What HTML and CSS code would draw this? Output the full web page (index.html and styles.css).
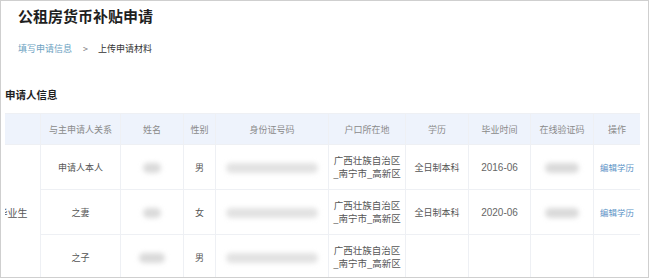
FILE: index.html
```html
<!DOCTYPE html>
<html lang="zh-CN">
  <head>
    <meta charset="UTF-8" />
    <meta name="viewport" content="width=device-width, initial-scale=1.0" />
    <title>公租房货币补贴申请</title>
    <link rel="stylesheet" href="styles.css">
  </head>
  <body>
    <div class="frame">
      <h1 class="page-title">公租房货币补贴申请</h1>

      <div class="steps">
        <span class="step done">填写申请信息</span>
        <span class="sep">&gt;</span>
        <span class="step">上传申请材料</span>
      </div>

      <h2 class="section-title">申请人信息</h2>

      <div class="table-wrap">
        <table class="info-table">
          <colgroup>
            <col style="width: 56px" />
            <col style="width: 80px" />
            <col style="width: 63px" />
            <col style="width: 32px" />
            <col style="width: 113px" />
            <col style="width: 77px" />
            <col style="width: 63px" />
            <col style="width: 62px" />
            <col style="width: 63px" />
            <col style="width: 47px" />
          </colgroup>
          <thead>
            <tr>
              <th></th>
              <th>与主申请人关系</th>
              <th>姓名</th>
              <th>性别</th>
              <th>身份证号码</th>
              <th>户口所在地</th>
              <th>学历</th>
              <th>毕业时间</th>
              <th>在线验证码</th>
              <th>操作</th>
            </tr>
          </thead>
          <tbody>
            <tr>
              <td rowspan="3" class="group">毕业生</td>
              <td>申请人本人</td>
              <td><span class="blur name"></span></td>
              <td>男</td>
              <td><span class="blur id"></span></td>
              <td class="addr">广西壮族自治区<br />_南宁市_高新区</td>
              <td>全日制本科</td>
              <td class="num">2016-06</td>
              <td><span class="blur code"></span></td>
              <td><a class="link" href="#">编辑学历</a></td>
            </tr>
            <tr>
              <td>之妻</td>
              <td><span class="blur name"></span></td>
              <td>女</td>
              <td><span class="blur id"></span></td>
              <td class="addr">广西壮族自治区<br />_南宁市_高新区</td>
              <td>全日制本科</td>
              <td class="num">2020-06</td>
              <td><span class="blur code"></span></td>
              <td><a class="link" href="#">编辑学历</a></td>
            </tr>
            <tr>
              <td>之子</td>
              <td><span class="blur name wide"></span></td>
              <td>男</td>
              <td><span class="blur id"></span></td>
              <td class="addr">广西壮族自治区<br />_南宁市_高新区</td>
              <td></td>
              <td></td>
              <td></td>
              <td></td>
            </tr>
          </tbody>
        </table>
      </div>
    </div>
  </body>
</html>
```

FILE: styles.css
```css
body {
  margin: 0;
  background: #fff;
  font-family: "Noto Sans CJK SC", "Liberation Sans", sans-serif;
  color: #333;
}

.frame {
  width: 649px;
  height: 278px;
  box-sizing: border-box;
  border: 1px solid #cfcfcf;
  overflow: hidden;
}

.page-title {
  margin: 5px 0 0 17px;
  font-size: 15px;
  line-height: 20px;
  font-weight: bold;
  color: #1f1f1f;
}

.steps {
  margin: 17px 0 0 17px;
  font-size: 9px;
  line-height: 12px;
  color: #333;
}

.steps .done {
  color: #6b9fc1;
}

.steps .sep {
  margin: 0 8px 0 9px;
  color: #777;
}

.section-title {
  margin: 33px 0 0 4px;
  font-size: 10.5px;
  line-height: 14px;
  font-weight: bold;
  color: #1f1f1f;
}

.table-wrap {
  margin: 11px 0 0 4px;
  width: 635px;
  overflow: hidden;
}

.info-table {
  margin-left: -21px;
  width: 656px;
  table-layout: fixed;
  border-collapse: collapse;
  font-size: 9px;
}

.info-table th,
.info-table td {
  border: 1px solid #eef0f4;
  text-align: center;
  vertical-align: middle;
  padding: 0;
}

.info-table th {
  height: 30px;
  background: #eef3fc;
  font-weight: normal;
  color: #8a8a8a;
}

.info-table td {
  height: 44px;
  color: #555;
}

.info-table td.group {
  font-size: 10px;
}

.info-table td.addr {
  line-height: 13px;
  font-size: 9.5px;
}

.info-table td.num {
  font-family: "Liberation Sans", sans-serif;
  font-size: 10px;
  color: #666;
}

.link {
  color: #5b93c6;
  text-decoration: none;
  font-size: 8.5px;
}

.blur {
  display: inline-block;
  height: 10px;
  border-radius: 5px;
  background: #dadada;
  filter: blur(2.5px);
  vertical-align: middle;
}

.blur.name {
  width: 18px;
}

.blur.name.wide {
  width: 26px;
}

.blur.id {
  width: 92px;
  background: #e2e2e2;
}

.blur.code {
  width: 34px;
}
```
